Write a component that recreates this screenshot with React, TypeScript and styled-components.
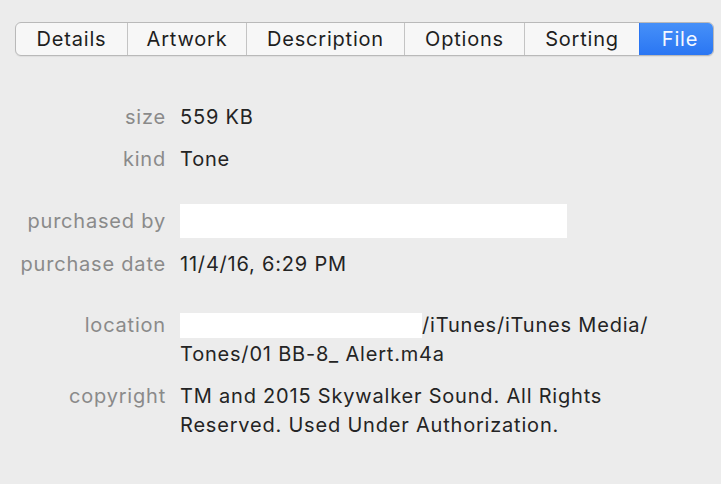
import React from "react";
import styled, { createGlobalStyle } from "styled-components";

const Global = createGlobalStyle`
  html, body { margin: 0; padding: 0; background: #ececec; }
  body { font-family: Inter, "Liberation Sans", Arial, sans-serif; -webkit-font-smoothing: antialiased; }
`;

const Page = styled.div`
  width: 721px;
  height: 484px;
  background: #ececec;
  padding-top: 22px;
  box-sizing: border-box;
  overflow: hidden;
`;

const TabBar = styled.div`
  display: flex;
  margin-left: 15px;
  width: 699px;
  height: 34px;
  box-sizing: border-box;
  border: 1px solid #b9b9b9;
  border-radius: 6px;
  background: #f7f7f7;
  overflow: hidden;
  box-shadow: 0 1px 1px rgba(0,0,0,0.06);
`;

const Tab = styled.div<{ $w: number; $active?: boolean }>`
  width: ${(p) => p.$w}px;
  flex: none;
  display: flex;
  align-items: center;
  justify-content: center;
  font-size: 20px;
  letter-spacing: 0.8px;
  color: ${(p) => (p.$active ? "#f4f8ff" : "#1e1e1e")};
  background: ${(p) => (p.$active ? "linear-gradient(#4690f8, #2a76f3)" : "transparent")};
  border-left: 1px solid ${(p) => (p.$active ? "#2a76f3" : "#c4c4c4")};
  &:first-child { border-left: none; }
`;

const Info = styled.div`
  display: grid;
  grid-template-columns: 166px 1fr;
  column-gap: 14px;
  margin-top: 47px;
  font-size: 20px;
  line-height: 29px;
  letter-spacing: 0.8px;
`;

const Label = styled.div<{ $gap?: number }>`
  text-align: right;
  color: #8a8a8a;
  margin-top: ${(p) => p.$gap ?? 0}px;
`;

const Value = styled.div<{ $gap?: number }>`
  color: #242424;
  margin-top: ${(p) => p.$gap ?? 0}px;
  white-space: nowrap;
`;

const Redacted = styled.div`
  width: 387px;
  height: 34px;
  margin-top: -3px;
  background: #ffffff;
`;

const RedactedInline = styled.span`
  display: inline-block;
  width: 242px;
  height: 25px;
  background: #ffffff;
  vertical-align: -6px;
`;

export default function App() {
  return (
    <Page>
      <Global />
      <TabBar>
        <Tab $w={111}>Details</Tab>
        <Tab $w={118}>Artwork</Tab>
        <Tab $w={157}>Description</Tab>
        <Tab $w={119}>Options</Tab>
        <Tab $w={114}>Sorting</Tab>
        <Tab $w={80} $active>File</Tab>
      </TabBar>
      <Info>
        <Label>size</Label>
        <Value>559 KB</Value>
        <Label $gap={13}>kind</Label>
        <Value $gap={13}>Tone</Value>
        <Label $gap={33}>purchased by</Label>
        <Value $gap={33}><Redacted /></Value>
        <Label $gap={12}>purchase date</Label>
        <Value $gap={12}>11/4/16, 6:29 PM</Value>
        <Label $gap={32}>location</Label>
        <Value $gap={32}>
          <RedactedInline />/iTunes/iTunes Media/
          <br />
          Tones/01 BB-8_ Alert.m4a
        </Value>
        <Label $gap={13}>copyright</Label>
        <Value $gap={13}>
          TM and 2015 Skywalker Sound. All Rights
          <br />
          Reserved. Used Under Authorization.
        </Value>
      </Info>
    </Page>
  );
}
